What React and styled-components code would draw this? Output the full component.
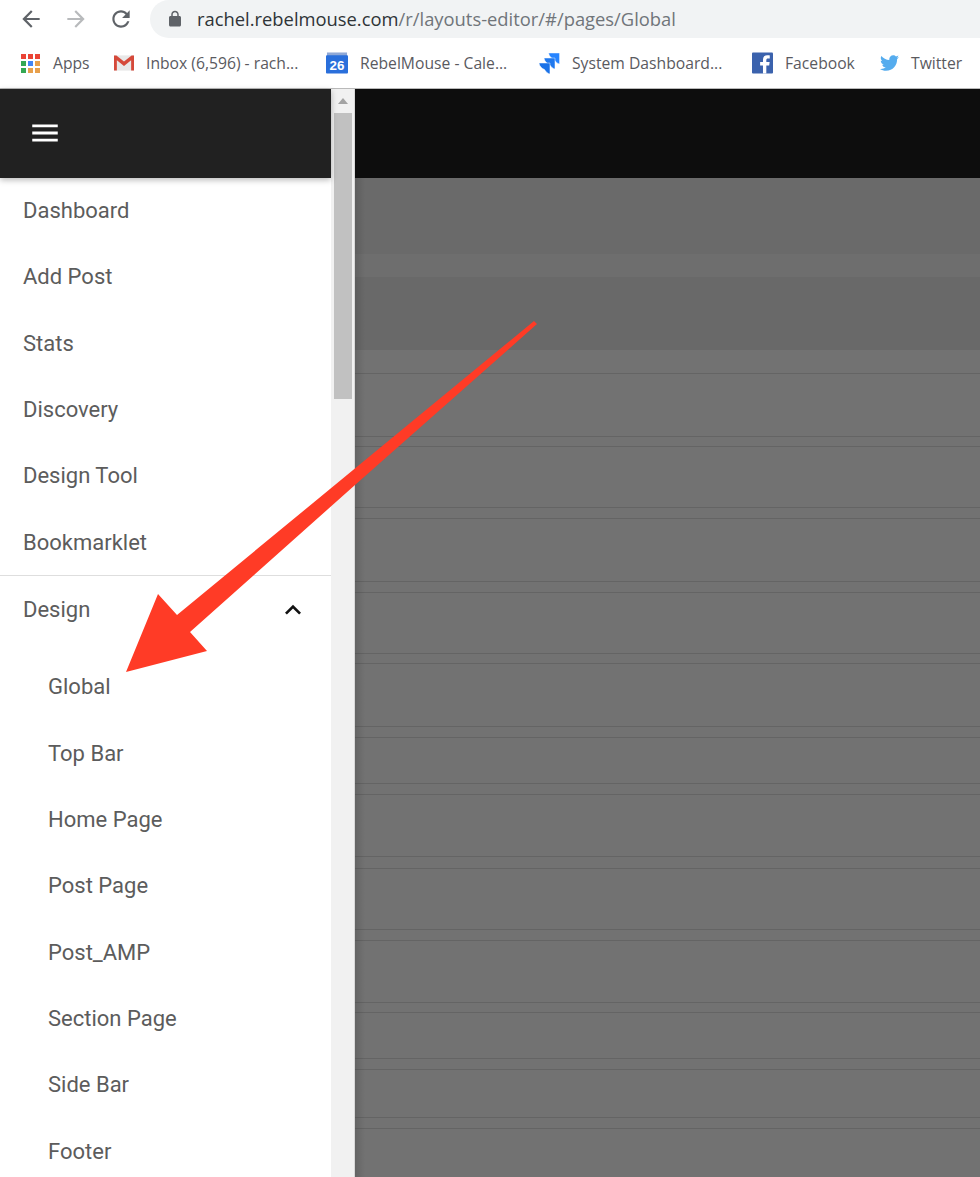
import React from "react";
import styled, { createGlobalStyle } from "styled-components";
import { FaTwitter } from "react-icons/fa";

const GlobalStyle = createGlobalStyle`
    html, body {
        margin: 0;
        padding: 0;
        background: #fff;
    }
    body {
        width: 980px;
        height: 1177px;
        overflow: hidden;
    }
`;

const bookmarks = [
    { key: "apps", label: "Apps", width: 93, slot: 20, icon: <AppsIcon /> },
    { key: "gmail", label: "Inbox (6,596) - rach...", width: 212, slot: 20, icon: <GmailIcon /> },
    { key: "cal", label: "RebelMouse - Cale...", width: 213, slot: 22, icon: <CalendarIcon /> },
    { key: "jira", label: "System Dashboard...", width: 213, slot: 21, icon: <JiraIcon /> },
    { key: "fb", label: "Facebook", width: 128, slot: 21, icon: <FacebookIcon /> },
    { key: "tw", label: "Twitter", width: 90, slot: 19, icon: <FaTwitter size={20} color="#55acee" /> },
];

const topMenu = ["Dashboard", "Add Post", "Stats", "Discovery", "Design Tool", "Bookmarklet"];
const subMenu = ["Global", "Top Bar", "Home Page", "Post Page", "Post_AMP", "Section Page", "Side Bar", "Footer"];

// distance between the faint rules in the dimmed page
const stripes = [23, 63, 10, 61, 11, 63, 11, 61, 10, 63, 11, 46, 11, 62, 12, 61, 11, 62, 10, 46, 11, 48, 11];

function AppsIcon() {
    const colors = ["#ea4335", "#ea4335", "#ea4335", "#34a853", "#4285f4", "#e8a04c", "#34a853", "#e8a04c", "#e8a04c"];
    return (
        <svg width="19" height="19" viewBox="0 0 19 19">
            {colors.map((c, i) => (
                <rect key={i} x={(i % 3) * 7} y={Math.floor(i / 3) * 7} width="5" height="5" fill={c} />
            ))}
        </svg>
    );
}

function GmailIcon() {
    return (
        <svg width="21" height="16" viewBox="0 0 21 16">
            <rect x="0" y="0" width="21" height="16" fill="#e8e8e8" />
            <path d="M0 16V0h2.5l8 6.5 8-6.5H21v16h-3V5.2l-7.500 6-7.500-6V16z" fill="#d5493a" />
        </svg>
    );
}

function CalendarIcon() {
    return (
        <svg width="23" height="22" viewBox="0 0 23 22">
            <rect x="1" y="0" width="21" height="5" fill="#8fa8d6" />
            <rect x="0" y="3" width="23" height="19" rx="1" fill="#2a6fdb" />
            <text x="11.500" y="18" textAnchor="middle" fontFamily="'Liberation Sans', sans-serif" fontSize="14" fontWeight="700" fill="#fff">
                26
            </text>
        </svg>
    );
}

function JiraIcon() {
    const wing = "M0 0h12v12c-2.500-.5-4.500-2.500-6-5C3 6 .5 3.500 0 0z";
    return (
        <svg width="23" height="23" viewBox="0 0 23 23" stroke="#fff" strokeWidth="0.5">
            <path d={wing} transform="translate(10.500 0)" fill="#2684ff" />
            <path d={wing} transform="translate(5.500 5.500)" fill="#1f78ee" />
            <path d={wing} transform="translate(0 11)" fill="#1a72e8" />
        </svg>
    );
}

function FacebookIcon() {
    return (
        <svg width="22" height="22" viewBox="0 0 22 22">
            <rect width="22" height="22" rx="1" fill="#3b62ad" />
            <path d="M15 22v-8.500h3l.5-3.500H15V8c0-1 .4-1.700 1.800-1.700h1.800V3.200C18.200 3.100 17.200 3 16 3c-2.700 0-4.500 1.600-4.500 4.500V10h-3v3.500h3V22z" fill="#fff" />
        </svg>
    );
}

const ChromeIcon = ({ d, color, size = 26 }) => (
    <svg width={size} height={size} viewBox="0 0 24 24" fill={color}>
        <path d={d} />
    </svg>
);

const BACK = "M20 11H7.83l5.59-5.59L12 4l-8 8 8 8 1.41-1.41L7.83 13H20v-2z";
const FORWARD = "M12 4l-1.41 1.41L16.170 11H4v2h12.170l-5.580 5.590L12 20l8-8z";
const RELOAD = "M17.650 6.350C16.200 4.900 14.210 4 12 4c-4.420 0-7.990 3.580-7.990 8s3.570 8 7.990 8c3.730 0 6.840-2.550 7.730-6h-2.080c-.82 2.330-3.040 4-5.650 4-3.310 0-6-2.690-6-6s2.690-6 6-6c1.660 0 3.140.69 4.220 1.780L13 11h7V4l-2.350 2.350z";
const LOCK = "M18 8h-1V6c0-2.760-2.240-5-5-5S7 3.240 7 6v2H6c-1.100 0-2 .9-2 2v10c0 1.100.9 2 2 2h12c1.100 0 2-.9 2-2V10c0-1.100-.9-2-2-2zM9 6c0-1.660 1.340-3 3-3s3 1.340 3 3v2H9V6z";
const MENU = "M3 18h18v-2H3v2zm0-5h18v-2H3v2zm0-7v2h18V6H3z";
const CHEVRON_UP = "M12 8l-6 6 1.410 1.410L12 10.830l4.590 4.580L18 14z";

const App = () => {
    return (
        <Page>
            <GlobalStyle />
            <Toolbar>
                <NavButtons>
                    <ChromeIcon d={BACK} color="#5f6368" />
                    <ChromeIcon d={FORWARD} color="#b8babc" />
                    <ChromeIcon d={RELOAD} color="#5f6368" />
                </NavButtons>
                <Omnibox>
                    <ChromeIcon d={LOCK} color="#5f6368" size={18} />
                    <Url>
                        <UrlHost>rachel.rebelmouse.com</UrlHost>/r/layouts-editor/#/pages/Global
                    </Url>
                </Omnibox>
            </Toolbar>
            <BookmarkBar>
                {bookmarks.map((b) => (
                    <Bookmark key={b.key} $width={b.width}>
                        <BookmarkIcon $slot={b.slot}>{b.icon}</BookmarkIcon>
                        {b.label}
                    </Bookmark>
                ))}
            </BookmarkBar>
            <Main>
                <Drawer>
                    <DrawerHeader>
                        <ChromeIcon d={MENU} color="#fff" size={34} />
                    </DrawerHeader>
                    <Menu>
                        {topMenu.map((item) => (
                            <MenuItem key={item}>{item}</MenuItem>
                        ))}
                    </Menu>
                    <Divider />
                    <MenuItem>
                        Design
                        <ChromeIcon d={CHEVRON_UP} color="#111" size={32} />
                    </MenuItem>
                    <SubMenu>
                        {subMenu.map((item) => (
                            <MenuItem key={item} $sub>
                                {item}
                            </MenuItem>
                        ))}
                    </SubMenu>
                </Drawer>
                <Scrollbar>
                    <ScrollUp />
                    <ScrollThumb />
                </Scrollbar>
                <Dimmed>
                    <DarkBar />
                    <Panel $height={76} $color="#6a6a6a" />
                    <Panel $height={23} $color="#6e6e6e" />
                    <Panel $height={73} $color="#696969" />
                    {stripes.map((h, i) => (
                        <Stripe key={i} $height={h} />
                    ))}
                </Dimmed>
            </Main>
            <Arrow viewBox="0 0 980 1177">
                <polygon points="534,321 537,324 355,485 190,632 207,651 126,672 158,594 177,615" fill="#ff3b26" />
            </Arrow>
        </Page>
    );
};

const Page = styled.div`
    position: relative;
    width: 980px;
    height: 1177px;
    overflow: hidden;
    display: flex;
    flex-direction: column;
    background: #fff;
`;
const Toolbar = styled.div`
    display: flex;
    height: 38px;
    flex: none;
`;
const NavButtons = styled.div`
    width: 150px;
    flex: none;
    display: flex;
    gap: 19px;
    padding: 6px 0 0 18px;
    box-sizing: border-box;
`;
const Omnibox = styled.div`
    flex: 1;
    display: flex;
    align-items: center;
    gap: 13px;
    padding-left: 16px;
    background: #f1f3f4;
    border-radius: 19px 0 0 19px;
`;
const Url = styled.div`
    margin-bottom: 2px;
    font-family: "Open Sans", "Noto Sans", sans-serif;
    font-size: 18.380px;
    color: #70757a;
    white-space: nowrap;
`;
const UrlHost = styled.span`
    color: #2f3337;
`;
const BookmarkBar = styled.div`
    display: flex;
    align-items: center;
    height: 50px;
    flex: none;
    padding-left: 21px;
    border-bottom: 1px solid #b9b9b9;
    box-sizing: content-box;
`;
const Bookmark = styled.div`
    width: ${(p) => p.$width}px;
    flex: none;
    display: flex;
    align-items: center;
    gap: 12px;
    font-family: "Open Sans", "Noto Sans", sans-serif;
    font-size: 15.700px;
    color: #5a5a5f;
    white-space: nowrap;
`;
const BookmarkIcon = styled.span`
    display: flex;
    flex: none;
    width: ${(p) => p.$slot}px;
`;
const Main = styled.div`
    flex: 1;
    display: flex;
    min-height: 0;
`;
const Drawer = styled.div`
    width: 331px;
    flex: none;
    background: #fff;
    z-index: 1;
`;
const DrawerHeader = styled.div`
    height: 88.500px;
    display: flex;
    align-items: center;
    padding-left: 28px;
    background: #212121;
    box-shadow: 0 2px 6px rgba(0, 0, 0, 0.28);
`;
const Menu = styled.div`
    display: flex;
    flex-direction: column;
`;
const MenuItem = styled.div`
    height: 66.33px;
    flex: none;
    display: flex;
    align-items: center;
    justify-content: space-between;
    padding: 0 22px 0 ${(p) => (p.$sub ? "48px" : "23px")};
    font-family: Roboto, "Liberation Sans", sans-serif;
    font-size: 22px;
    color: #5c5c5c;
`;
const Divider = styled.div`
    height: 1px;
    background: #dedede;
`;
const SubMenu = styled.div`
    display: flex;
    flex-direction: column;
    padding-top: 11px;
`;
const Scrollbar = styled.div`
    width: 24px;
    flex: none;
    display: flex;
    flex-direction: column;
    align-items: center;
    background: #f1f1f1;
    border-right: 1px solid #d8d8d8;
    box-sizing: border-box;
`;
const ScrollUp = styled.div`
    width: 0;
    height: 0;
    margin: 9px 0 9px;
    border-left: 5px solid transparent;
    border-right: 5px solid transparent;
    border-bottom: 6px solid #a3a3a3;
`;
const ScrollThumb = styled.div`
    width: 18px;
    height: 286px;
    margin-left: 1px;
    background: #c1c1c1;
`;
const Dimmed = styled.div`
    position: relative;
    flex: 1;
    min-width: 0;
    background: #727272;

    &::before {
        content: "";
        position: absolute;
        top: 89px;
        bottom: 0;
        left: 0;
        width: 10px;
        background: linear-gradient(to right, rgba(0, 0, 0, 0.12), rgba(0, 0, 0, 0));
    }
`;
const DarkBar = styled.div`
    height: 89px;
    background: #0d0d0d;
`;
const Panel = styled.div`
    height: ${(p) => p.$height}px;
    background: ${(p) => p.$color};
`;
const Stripe = styled.div`
    height: ${(p) => p.$height}px;
    box-sizing: content-box;
    border-bottom: 1px solid #646464;
    margin-bottom: -1px;
`;
const Arrow = styled.svg`
    position: absolute;
    top: 0;
    left: 0;
    width: 980px;
    height: 1177px;
    pointer-events: none;
    z-index: 2;
`;

export default App;
